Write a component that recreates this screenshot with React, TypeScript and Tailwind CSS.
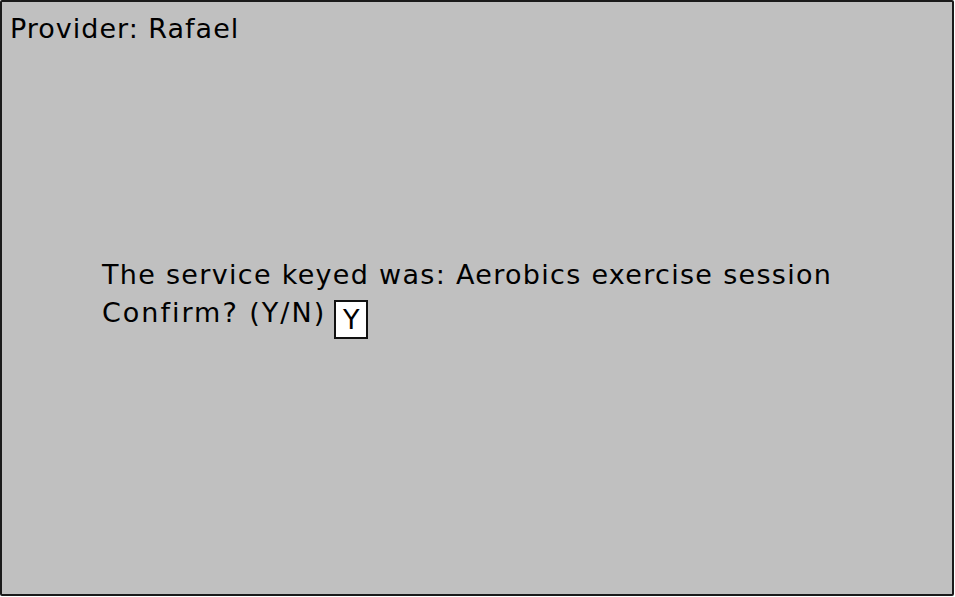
export default function App() {
  return (
    <div className="w-[955px] h-[597px] bg-white">
      <div
        className="w-[954px] h-[596px] bg-[#c0c0c0] border-2 border-[#1a1a1a] rounded-[2px] text-black flex flex-col"
        style={{ fontFamily: '"DejaVu Sans", "Liberation Sans", sans-serif' }}
      >
        <div className="pl-[8px] pt-[10px] text-[27px] leading-[34px] tracking-[1px]">Provider: Rafael</div>
        <div className="pl-[100px] pt-[210px] text-[27px] leading-[38px] tracking-[1.3px]">
          <div>The service keyed was: Aerobics exercise session</div>
          <div className="flex items-start">
            <span className="tracking-[2px]">Confirm? (Y/N)</span>
            <span className="ml-[8px] mt-[6px] w-[34px] h-[39px] bg-white border-2 border-[#111] flex items-center justify-center leading-none tracking-normal">Y</span>
          </div>
        </div>
      </div>
    </div>
  );
}
